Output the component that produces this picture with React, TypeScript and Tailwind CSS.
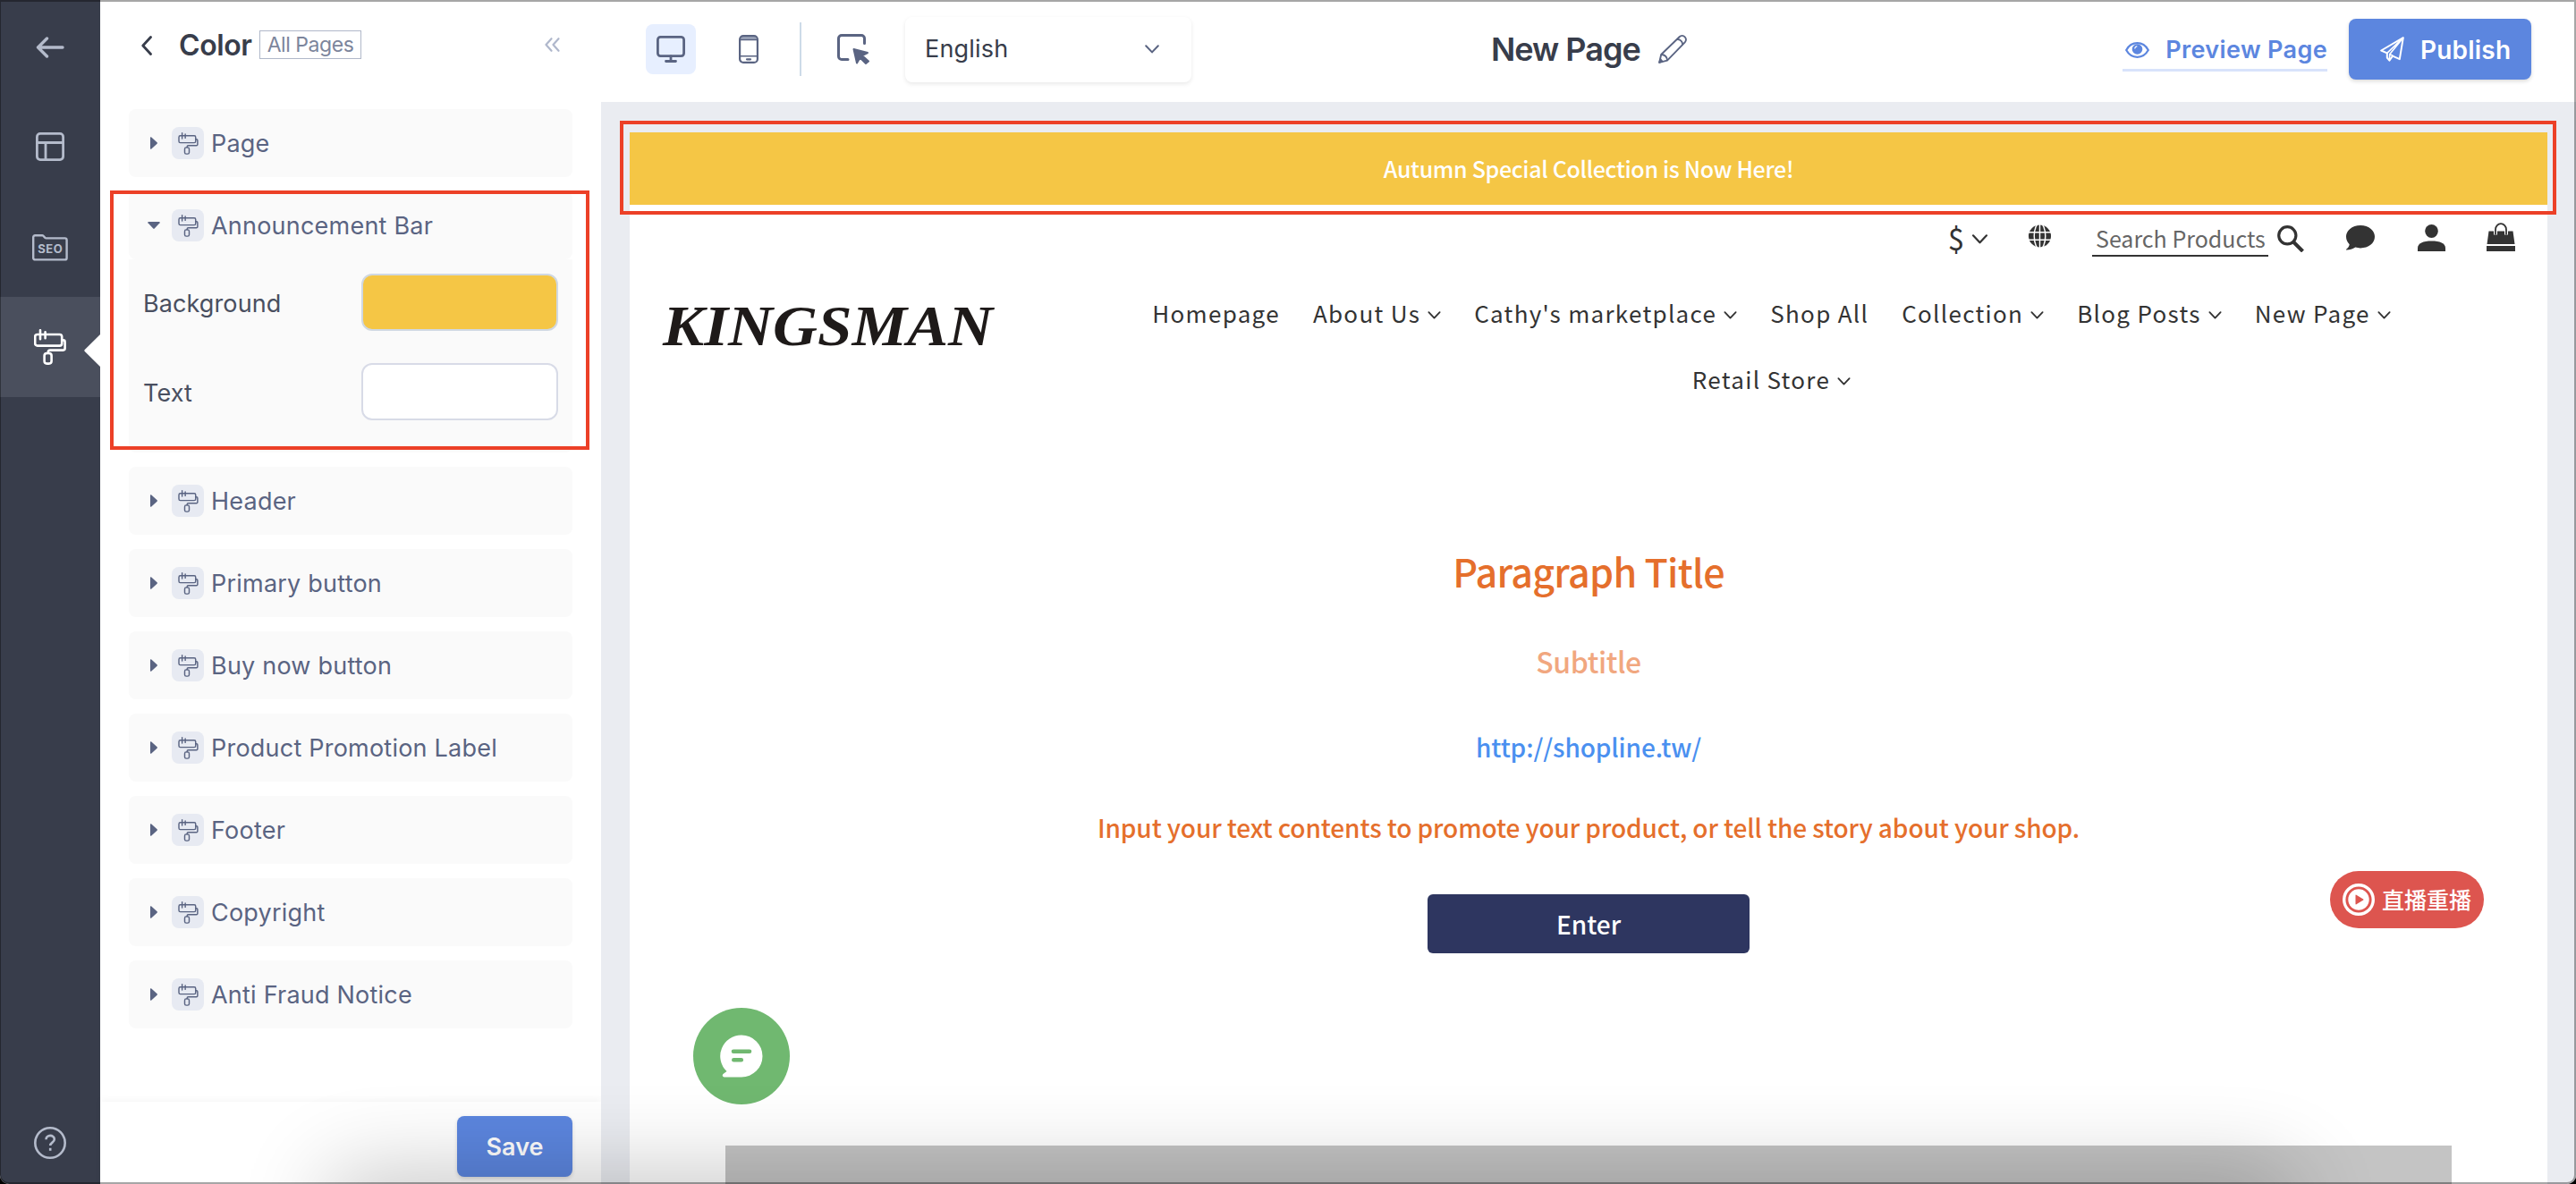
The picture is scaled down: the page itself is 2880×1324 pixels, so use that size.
import { useState } from 'react';

const sections = ['Header', 'Primary button', 'Buy now button', 'Product Promotion Label', 'Footer', 'Copyright', 'Anti Fraud Notice'];

const navTop = [
  { label: 'Homepage', menu: false },
  { label: 'About Us', menu: true },
  { label: "Cathy's marketplace", menu: true },
  { label: 'Shop All', menu: false },
  { label: 'Collection', menu: true },
  { label: 'Blog Posts', menu: true },
  { label: 'New Page', menu: true },
];

function RollerIcon({ className, stroke = 2 }: { className: string; stroke?: number }) {
  return (
    <svg className={className} viewBox="0 0 36 40" fill="none" stroke="currentColor" strokeWidth={stroke} strokeLinecap="round" strokeLinejoin="round">
      <rect x="1.2" y="6" width="30" height="12.6" rx="2.6" />
      <path d="M7 1.2v10M12.6 3.2v7M31.2 12.4h1.4a2 2 0 0 1 2 2v7.2a2 2 0 0 1-2 2H18a2.2 2.2 0 0 0-2.2 2.2V27" />
      <rect x="11.6" y="27" width="8" height="11.6" rx="2.8" />
    </svg>
  );
}

function Caret({ className }: { className: string }) {
  return (
    <svg className={className} viewBox="0 0 16 10" fill="none" stroke="currentColor" strokeWidth="2" strokeLinecap="round" strokeLinejoin="round">
      <path d="M1.2 1.2 8 8.4l6.8-7.2" />
    </svg>
  );
}

function SectionRow({ label, open = false }: { label: string; open?: boolean }) {
  return (
    <div className="h-[76px] shrink-0 flex items-center rounded-lg bg-[#fafafa] pl-[19px]">
      <div className="w-[18px] flex justify-center text-[#5a6482]">
        {open
          ? <svg className="w-3.5 h-2" viewBox="0 0 14 8" fill="currentColor"><path d="M1 0h12a.8.8 0 0 1 .6 1.3L7.7 7.6a1 1 0 0 1-1.4 0L.4 1.3A.8.8 0 0 1 1 0z" /></svg>
          : <svg className="w-2 h-3.5" viewBox="0 0 8 14" fill="currentColor"><path d="M0 1v12a.8.8 0 0 0 1.3.6l6.3-5.9a1 1 0 0 0 0-1.4L1.3.4A.8.8 0 0 0 0 1z" /></svg>}
      </div>
      <div className="w-9 h-9 ml-[11px] mr-2 rounded-lg bg-[#e7eaf2] flex items-center justify-center text-[#5a6482]">
        <RollerIcon className="w-[23px] h-[25px]" stroke={2.3} />
      </div>
      <span className="pt-0.5 text-[27px] tracking-[0.22px] text-[#5a6482] whitespace-nowrap">{label}</span>
    </div>
  );
}

function NavItem({ label, menu }: { label: string; menu: boolean }) {
  return (
    <div className="flex items-center text-[26px] tracking-[1.3px] leading-[38px] text-[#333333] whitespace-nowrap">
      {label}
      {menu && <Caret className="w-[15px] h-[9px] ml-2 mt-[5px]" />}
    </div>
  );
}

export default function App() {
  const [background] = useState('#f5c645');
  const [text] = useState('#ffffff');

  return (
    <div className="relative w-[2880px] h-[1324px] overflow-hidden bg-black">
      <div className="flex w-full h-full overflow-hidden rounded-b-[10px] bg-white font-[Inter,sans-serif]">
        {/* Icon rail */}
        <aside className="w-28 shrink-0 flex flex-col bg-[#383d4b] text-[#b4bbcb]">
          <div className="h-[108px] flex items-center justify-center pb-0.5">
            <svg className="w-8 h-6" viewBox="0 0 32 24" fill="none" stroke="currentColor" strokeWidth="3.4" strokeLinecap="round" strokeLinejoin="round">
              <path d="M30 12H2.5M12.5 2l-10 10 10 10" />
            </svg>
          </div>
          <div className="h-28 flex items-center justify-center">
            <svg className="w-8 h-8" viewBox="0 0 32 32" fill="none" stroke="currentColor" strokeWidth="2.8">
              <rect x="1.4" y="1.4" width="29.2" height="29.2" rx="3.5" />
              <path d="M1.3 11.5h29.4M11 11.5v19" />
            </svg>
          </div>
          <div className="h-28 pt-0.5 flex items-center justify-center">
            <svg className="w-10 h-[30px]" viewBox="0 0 40 30" fill="none" stroke="currentColor" strokeWidth="2.4" strokeLinejoin="round">
              <path d="M1.2 3.2a2 2 0 0 1 2-2h8.2c1.6 0 2.3 3.2 4 3.2h21.2a2 2 0 0 1 2 2v20a2 2 0 0 1-2 2H3.2a2 2 0 0 1-2-2z" />
              <text x="20.3" y="20.5" textAnchor="middle" fontSize="13" fontWeight="700" letterSpacing="0.6" fill="currentColor" stroke="none" fontFamily="Inter, sans-serif">SEO</text>
            </svg>
          </div>
          <div className="relative h-28 flex items-center justify-center bg-[#4a4f5d] text-white">
            <RollerIcon className="w-9 h-10" stroke={2.6} />
            <svg className="absolute right-0 top-[42px] w-[18px] h-9" viewBox="0 0 18 36" fill="white"><path d="M18 0v36L.8 19a1.4 1.4 0 0 1 0-2z" /></svg>
          </div>
          <div className="mt-auto mb-7 flex justify-center">
            <svg className="w-9 h-9" viewBox="0 0 36 36" fill="none" stroke="currentColor" strokeWidth="2.6">
              <circle cx="18" cy="18" r="16.7" />
              <path d="M13.5 14.3c0-5.8 9.3-5.8 9.3-.3 0 3.6-4.6 3.6-4.6 7" />
              <path d="M18.2 23.8v3" />
            </svg>
          </div>
        </aside>

        {/* Color settings */}
        <section className="w-[560px] shrink-0 flex flex-col">
          <div className="h-[102px] shrink-0 flex items-center pl-[46px] pr-[46px]">
            <svg className="w-3 h-[22px] -mt-px text-[#383d4b]" viewBox="0 0 12 22" fill="none" stroke="currentColor" strokeWidth="2.8" strokeLinecap="round" strokeLinejoin="round">
              <path d="M10.5 1.5 1.8 11l8.700 9.500" />
            </svg>
            <h1 className="ml-[30px] text-[32px] leading-none font-semibold tracking-[-0.4px] text-[#383d4b]">Color</h1>
            <span className="ml-2 h-8 -mt-0.5 px-2 flex items-center border border-[#b0b8c9] text-[23px] tracking-[-0.45px] text-[#7c859c] whitespace-nowrap">All Pages</span>
            <svg className="ml-auto w-[17px] h-4 -mt-0.5 text-[#b0b8cc]" viewBox="0 0 17 16" fill="none" stroke="currentColor" strokeWidth="2.2" strokeLinecap="round" strokeLinejoin="round">
              <path d="M7.500 1.200 1.500 8l6 6.800M15.500 1.200 9.500 8l6 6.800" />
            </svg>
          </div>

          <div className="flex-1 flex flex-col gap-4 pt-5 px-8">
            <SectionRow label="Page" />
            <div className="relative">
              <SectionRow label="Announcement Bar" open />
              <div className="h-[216px] flex flex-col gap-9 pt-4 px-4 rounded-b-lg bg-[#fafafa] text-[27px] tracking-[0.1px] text-[#494f60]">
                <div className="h-16 flex items-center justify-between">
                  <span className="pt-[5px]">Background</span>
                  <div className="w-[220px] h-16 rounded-xl border-2 border-[#d0d8e2]" style={{ backgroundColor: background }} />
                </div>
                <div className="h-16 flex items-center justify-between">
                  <span className="pt-[5px]">Text</span>
                  <div className="w-[220px] h-16 rounded-xl border-2 border-[#d8dbe7]" style={{ backgroundColor: text }} />
                </div>
              </div>
              <div className="absolute -top-px -left-[21px] w-[536px] h-[290px] border-4 border-[#ec4027]" />
            </div>
            {sections.map(s => <SectionRow key={s} label={s} />)}
          </div>

          <div className="h-[92px] shrink-0 flex justify-end pt-4 pr-8 bg-white shadow-[0_-2px_8px_rgba(0,0,0,0.04)]">
            <button className="w-[129px] h-[68px] pt-0.5 rounded-lg bg-[#5c86df] text-white text-[27px] font-semibold shadow-[0_2px_4px_rgba(0,0,0,0.15)]">Save</button>
          </div>
        </section>

        <div className="flex-1 flex flex-col">
          {/* Toolbar */}
          <header className="h-[114px] shrink-0 flex items-center pl-[50px] pr-[50px] pb-1">
            <div className="w-14 h-14 rounded-lg bg-[#e7efff] flex items-center justify-center">
              <svg className="w-8 h-[30px] text-[#5a6482]" viewBox="0 0 32 30" fill="none" stroke="currentColor" strokeWidth="2.8" strokeLinecap="round">
                <rect x="1.4" y="1.4" width="29.2" height="21.2" rx="3" />
                <path d="M16 23v5M10.500 28.500h11" />
              </svg>
            </div>
            <svg className="ml-12 w-[22px] h-8 text-[#5a6482]" viewBox="0 0 22 32" fill="none" stroke="currentColor" strokeWidth="2.2">
              <path d="M1.500 5.500 4 1.200h14l2.500 4.300z" fill="#9ea6ba" stroke="none" />
              <rect x="1.1" y="1.1" width="19.8" height="29.8" rx="4" />
              <path d="M1.100 5.500h19.800M1.100 23.800h19.800" strokeWidth="1.6" />
              <path d="M9 27.300h4" strokeLinecap="round" />
            </svg>
            <div className="ml-[46px] w-0.5 h-[60px] bg-[#cddbe8]" />
            <svg className="ml-10 w-[37px] h-[35px] text-[#5a6482]" viewBox="0 0 37 35" fill="none" stroke="currentColor" strokeWidth="3" strokeLinecap="round" strokeLinejoin="round">
              <path d="M12 28.500H5a3.500 3.500 0 0 1-3.500-3.500V5A3.500 3.500 0 0 1 5 1.500h22A3.500 3.500 0 0 1 30.500 5v5.500" />
              <path d="m18.500 17 15.500 4-6 3.200 7 6.300-3 2.500-6.500-6.500-3.500 6z" fill="currentColor" strokeWidth="2" />
            </svg>
            <div className="ml-[39px] w-80 h-[73px] px-[22px] flex items-center justify-between rounded-lg bg-white shadow-[0_2px_5px_rgba(0,0,0,0.09)]">
              <span className="text-[27px] tracking-[0.2px] text-[#383d4b]">English</span>
              <Caret className="w-4 h-2.5 mr-3.5 text-[#5a6482]" />
            </div>
            <div className="ml-[335px] flex items-center">
              <h2 className="text-[36px] leading-none font-semibold tracking-[-1px] text-[#383d4b] whitespace-nowrap">New Page</h2>
              <svg className="ml-5 w-8 h-8 text-[#5a6482]" viewBox="0 0 32 32" fill="none" stroke="currentColor" strokeWidth="1.9" strokeLinejoin="round">
                <path d="m1.200 30.800 2-8.800L23.600 2.300a4.300 4.300 0 0 1 6.100 6.100L10 28.600z" />
                <path d="M3.200 22c3.600-.3 7 2.800 6.800 6.600M21 5c3.200-.3 6.500 2.600 6 6M1.200 30.800l3-1.500-1.700-2z" />
              </svg>
            </div>
            <div className="ml-auto h-[50px] pt-1 pl-[3px] flex items-center border-b-[3px] border-[#d8e3fb] text-[#5c86df]">
              <svg className="w-[27px] h-[18px]" viewBox="0 0 27 18" fill="none" stroke="currentColor" strokeWidth="2.2">
                <path d="M1.200 9C7-1.400 20-1.400 25.800 9 20 19.400 7 19.400 1.200 9z" />
                <circle cx="13.5" cy="8" r="5.8" fill="currentColor" stroke="none" />
                <path d="M10.800 7.500c0-1.600 1-2.700 2.500-2.700" stroke="white" strokeWidth="1.2" />
              </svg>
              <span className="ml-[18px] pt-0.5 text-[27px] font-semibold tracking-[0.35px] whitespace-nowrap">Preview Page</span>
            </div>
            <button className="ml-6 w-[204px] h-[68px] rounded-lg bg-[#5c86df] text-white flex items-center pl-[35px] text-[28px] font-semibold tracking-[0.2px] shadow-[0_2px_4px_rgba(0,0,0,0.15)]">
              <svg className="w-[27px] h-[28px]" viewBox="0 0 27 28" fill="none" stroke="currentColor" strokeWidth="2" strokeLinejoin="round">
                <path d="M25.800 1.200 1.200 15.500l6.600 2.800v5.200l2.600 3.200 3.600-5 7.800 3.400z" />
                <path d="M25.800 1.200 7.800 18.300M25.800 1.200 10.800 19.600l-.4 7M10.800 19.600l3.400 1.600" strokeWidth="1.6" />
              </svg>
              <span className="ml-[18px] pt-px">Publish</span>
            </button>
          </header>

          {/* Store preview */}
          <main className="relative flex-1 px-8 pt-[34px] bg-[#eaecf1] font-['Noto_Sans_CJK_TC',sans-serif]">
            <div className="relative h-full flex flex-col bg-white">
              <div className="h-[81px] shrink-0 flex items-center justify-center text-[25px] font-medium tracking-[-0.33px]" style={{ backgroundColor: background, color: text }}>
                Autumn Special Collection is Now Here!
              </div>

              <div className="h-[75px] shrink-0 flex items-start justify-end pr-9 pt-5 text-[#333333]">
                <span className="-mt-px text-[33px] leading-[37px]">$</span>
                <Caret className="w-[19px] h-[11px] ml-2 mt-[13px]" />
                <svg className="ml-[44px] mt-0.5 w-[27px] h-[26px]" viewBox="0 0 27 27">
                  <circle cx="13.5" cy="13.5" r="13" fill="currentColor" />
                  <g fill="none" stroke="white" strokeWidth="1.5">
                    <path d="M0 9h27M0 18h27M13.500 0v27" />
                    <ellipse cx="13.5" cy="13.5" rx="6.5" ry="15" />
                  </g>
                </svg>
                <div className="ml-[45px] w-[197px] h-[38px] pl-1 border-b-2 border-[#333333] text-[25px] leading-[35px] text-[#666666] whitespace-nowrap">Search Products</div>
                <svg className="ml-2.5 mt-[3px] w-[30px] h-[30px]" viewBox="0 0 30 30" fill="none" stroke="currentColor" strokeWidth="3.2">
                  <circle cx="11.3" cy="11.3" r="9.6" />
                  <path d="m17.500 18 11 11" strokeWidth="4" />
                </svg>
                <svg className="ml-[47px] mt-[3px] w-8 h-[28px]" viewBox="0 0 32 28" fill="currentColor">
                  <path d="M16 0c9 0 16 5.600 16 12.800s-7 12.600-16 12.600c-2 0-4-.3-5.700-.8C7.500 26.500 4 27.600.4 27.600c-.5 0-.6-.5-.2-.8 2-1.600 3.300-3.600 3.500-5.600C1.300 19 0 16 0 12.800 0 5.600 7 0 16 0z" />
                </svg>
                <svg className="ml-12 mt-0.5 w-[31px] h-[30px]" viewBox="0 0 31 30" fill="currentColor">
                  <ellipse cx="15.5" cy="7.5" rx="7.3" ry="7.5" />
                  <path d="M0 30v-3.500C0 21 6 18.500 15.500 18.500S31 21 31 26.500V30z" />
                </svg>
                <svg className="ml-[46px] w-8 h-8" viewBox="0 0 32 32" fill="none" stroke="currentColor" strokeWidth="1.8">
                  <path d="M2.500 9.500h27L31.500 24H.5zM0 26h32v6H0z" fill="currentColor" stroke="none" />
                  <path d="M10 13.500V8a6 6.800 0 0 1 12 0v5.500" stroke="white" strokeWidth="4" />
                  <path d="M10 13.500V8a6 6.800 0 0 1 12 0v5.500" />
                </svg>
              </div>

              <div className="h-[170px] shrink-0 flex">
                <svg className="ml-[26px] mt-[20px] w-[400px] h-[92px] shrink-0" viewBox="0 0 400 92">
                  <text x="11" y="62" fontFamily="'Liberation Serif', serif" fontSize="64" fontWeight="700" fontStyle="italic" textLength="369" lengthAdjust="spacingAndGlyphs" fill="#1e1a19">KINGSMAN</text>
                </svg>
                <div className="ml-[157px] mt-[27px] w-[1387px] flex flex-col items-center gap-9">
                  <div className="flex gap-[37px]">
                    {navTop.map(item => <NavItem key={item.label} label={item.label} menu={item.menu} />)}
                  </div>
                  <NavItem label="Retail Store" menu />
                </div>
              </div>

              <div className="flex flex-col items-center text-[#e56f2c] font-medium">
                <h3 className="mt-[132px] text-[43px] leading-[64px] tracking-[-0.7px]">Paragraph Title</h3>
                <p className="mt-[45px] text-[32px] leading-[48px] tracking-[-0.4px] text-[#f1a77f]">Subtitle</p>
                <a className="mt-[52px] text-[28px] leading-[40px] tracking-[-0.1px] text-[#4a90f0]">http://shopline.tw/</a>
                <p className="mt-[50px] text-[28px] leading-[40px] tracking-[-0.1px] whitespace-nowrap">Input your text contents to promote your product, or tell the story about your shop.</p>
                <button className="mt-[55px] w-[360px] h-[66px] pb-px rounded-md bg-[#2e3660] text-white text-[28px] font-medium">Enter</button>
              </div>

              <div className="absolute left-[107px] right-[107px] bottom-0 h-[43px] bg-[#c4c4c4]" />

              {/* Floating widgets */}
              <div className="absolute left-[71px] top-[979px] w-[108px] h-[108px] rounded-full bg-[#70b870] flex items-center justify-center">
                <svg className="w-12 h-12" viewBox="0 0 48 48">
                  <path d="M24 .5a23.500 23.500 0 0 1 0 47H4.800c-1.900 0-2.800-2.200-1.300-3.400L7.500 41A23.500 23.500 0 0 1 24 .5z" fill="white" />
                  <path d="M15 18.800h18M15.300 28.300h8.500" stroke="#70b870" strokeWidth="4.6" strokeLinecap="round" />
                </svg>
              </div>
              <div className="absolute right-[71px] top-[826px] w-[172px] h-16 pl-3.5 rounded-full bg-[#dd554f] flex items-center text-white">
                <svg className="w-9 h-9" viewBox="0 0 36 36">
                  <circle cx="18" cy="18" r="16.3" fill="none" stroke="white" strokeWidth="3.4" />
                  <circle cx="18" cy="18" r="11.7" fill="white" />
                  <path d="M14.500 13.200v9.600a.6.600 0 0 0 .9.500l7.800-4.800a.6.600 0 0 0 0-1l-7.800-4.800a.6.600 0 0 0-.9.500z" fill="#dd554f" />
                </svg>
                <span className="ml-2 text-[25px] font-medium whitespace-nowrap">直播重播</span>
              </div>
            </div>
            <div className="absolute left-[21px] top-[21px] w-[2165px] h-[105px] border-4 border-[#ec4027]" />
          </main>
        </div>
      </div>

      {/* Bottom shade and window edge */}
      <div className="absolute left-[390px] -bottom-[70px] w-[2150px] h-[60px] pointer-events-none shadow-[0_0_100px_20px_rgba(0,0,0,0.24)]" />
      <div className="absolute inset-0 border-2 border-l border-black/35 rounded-b-[10px] pointer-events-none" />
    </div>
  );
}
